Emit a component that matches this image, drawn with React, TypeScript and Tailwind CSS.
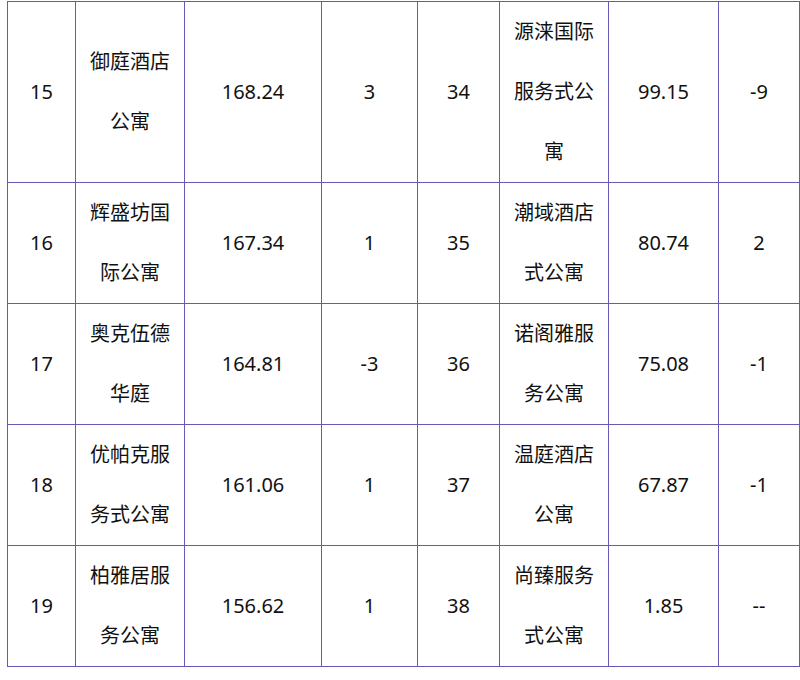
import React from "react";

type Row = {
  rank: string;
  name: string[];
  score: string;
  change: string;
  rank2: string;
  name2: string[];
  score2: string;
  change2: string;
};

const rows: Row[] = [
  { rank: "15", name: ["御庭酒店", "公寓"], score: "168.24", change: "3", rank2: "34", name2: ["源涞国际", "服务式公", "寓"], score2: "99.15", change2: "-9" },
  { rank: "16", name: ["辉盛坊国", "际公寓"], score: "167.34", change: "1", rank2: "35", name2: ["潮域酒店", "式公寓"], score2: "80.74", change2: "2" },
  { rank: "17", name: ["奥克伍德", "华庭"], score: "164.81", change: "-3", rank2: "36", name2: ["诺阁雅服", "务公寓"], score2: "75.08", change2: "-1" },
  { rank: "18", name: ["优帕克服", "务式公寓"], score: "161.06", change: "1", rank2: "37", name2: ["温庭酒店", "公寓"], score2: "67.87", change2: "-1" },
  { rank: "19", name: ["柏雅居服", "务公寓"], score: "156.62", change: "1", rank2: "38", name2: ["尚臻服务", "式公寓"], score2: "1.85", change2: "--" },
];

function Cell({ lines }: { lines: string[] }) {
  return (
    <div className="flex flex-col items-center justify-center border-r border-b border-[#6a58b6] text-center leading-[60px]">
      {lines.map((l, i) => (
        <span key={i}>{l}</span>
      ))}
    </div>
  );
}

export default function App() {
  return (
    <div className="h-[680px] w-[800px] bg-white pl-[7px] pt-px">
      <div
        className="grid grid-cols-[68px_109px_137px_96px_82px_109px_110px_81px] border-t border-l border-[#6a58b6] text-[20px] text-[#111]"
        style={{ fontFamily: '"Noto Sans", "Noto Sans CJK SC", sans-serif' }}
      >
        {rows.map((r) => (
          <React.Fragment key={r.rank}>
            <Cell lines={[r.rank]} />
            <Cell lines={r.name} />
            <Cell lines={[r.score]} />
            <Cell lines={[r.change]} />
            <Cell lines={[r.rank2]} />
            <Cell lines={r.name2} />
            <Cell lines={[r.score2]} />
            <Cell lines={[r.change2]} />
          </React.Fragment>
        ))}
      </div>
    </div>
  );
}
